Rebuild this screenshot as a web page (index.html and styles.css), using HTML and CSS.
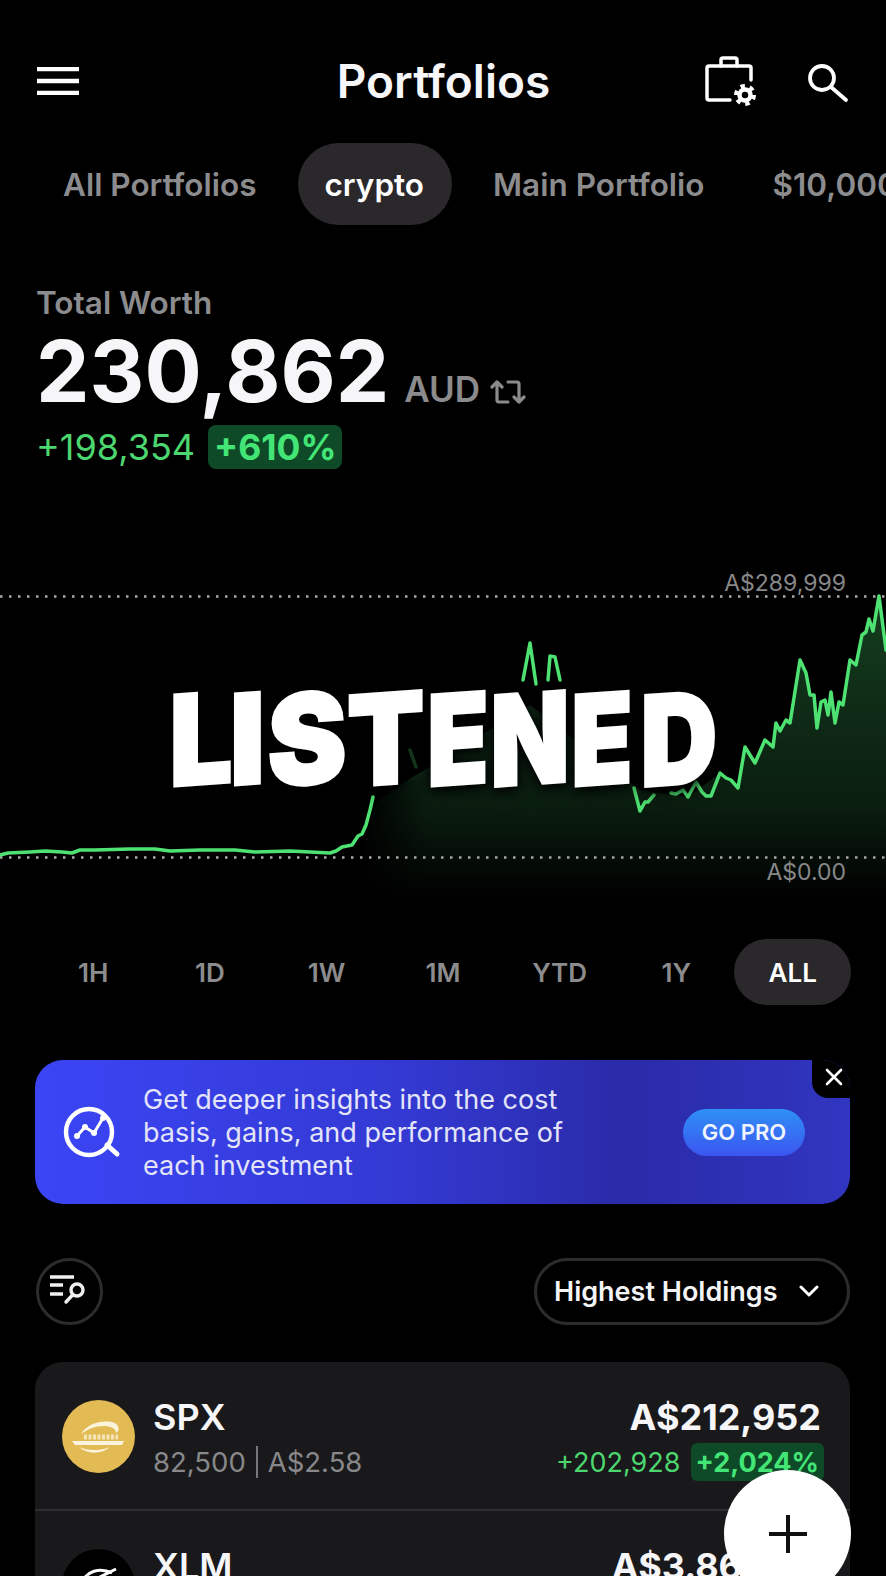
FILE: index.html
```html
<!DOCTYPE html>
<html lang="en">
<head>
<meta charset="utf-8">
<title>Portfolios</title>
<link rel="stylesheet" href="styles.css">
</head>
<body>
<div class="screen">
  <header class="header">
    <div class="header-left">
      <svg class="icon-menu" width="42" height="28" viewBox="0 0 42 28"><path d="M0 2h42M0 14h42M0 26h42" stroke="#fff" stroke-width="4.500"/></svg>
    </div>
    <h1 class="title">Portfolios</h1>
    <div class="header-right">
      <svg class="icon-case" width="60" height="56" viewBox="0 0 60 56" fill="none" stroke="#fff" stroke-width="3.5" stroke-linecap="round">
        <path d="M50 27V15a2 2 0 0 0-2-2H8a2 2 0 0 0-2 2V45a2 2 0 0 0 2 2H29"/>
        <path d="M20 13V7a2 2 0 0 1 2-2H34a2 2 0 0 1 2 2V13"/>
        <circle cx="44" cy="42" r="5.5" stroke-width="4.5"/>
        <circle cx="44" cy="42" r="9" stroke-width="4" stroke-dasharray="4.4 5" stroke-linecap="butt"/>
      </svg>
      <svg class="icon-search" width="50" height="50" viewBox="0 0 50 50" fill="none" stroke="#fff" stroke-width="3.8" stroke-linecap="round">
        <circle cx="20" cy="22" r="12"/>
        <path d="M29 31L44 44"/>
      </svg>
    </div>
  </header>

  <nav class="tabs">
    <span class="tab">All Portfolios</span>
    <span class="tab tab-active">crypto</span>
    <span class="tab">Main Portfolio</span>
    <span class="tab">$10,000</span>
  </nav>

  <section class="summary">
    <div class="summary-label">Total Worth</div>
    <div class="worth-row">
      <span class="worth">230,862</span>
      <span class="currency">AUD</span>
      <svg class="icon-swap" width="36" height="26" viewBox="0 0 36 26" fill="none" stroke="#8b8b8d" stroke-width="3.2" stroke-linecap="round" stroke-linejoin="round">
        <path d="M2 8L7 3L12 8M7 3V21a2 2 0 0 0 2 2H18"/>
        <path d="M34 18L29 23L24 18M29 23V5a2 2 0 0 0-2-2H18"/>
      </svg>
    </div>
    <div class="delta-row">
      <span class="delta">+198,354</span>
      <span class="delta-badge">+610%</span>
    </div>
  </section>

  <section class="chart">
    <svg class="chart-svg" width="886" height="340" viewBox="0 560 886 340">
      <defs>
        <linearGradient id="areaFill" x1="0" y1="0" x2="0" y2="1">
          <stop offset="0" stop-color="#15401f"/>
          <stop offset="0.35" stop-color="#0f2c17"/>
          <stop offset="0.7" stop-color="#0a1d0f"/>
          <stop offset="1" stop-color="#000"/>
        </linearGradient>
        <linearGradient id="areaEdge" x1="0" y1="0" x2="1" y2="0">
          <stop offset="0" stop-color="#000"/>
          <stop offset="1" stop-color="#000" stop-opacity="0"/>
        </linearGradient>
      </defs>
      <path fill="url(#areaFill)" d="M360 815L400 785L530 705L640 790L688 797L720 773L738 788L745 747L755 763L765 740L773 747L776 723L780 731L786 720L790 723L800 660L806 673L810 695L814 695L817 728L821 702L825 700L828 715L831 692L835 723L839 702L843 705L850 660L856 665L862 635L866 632L869 619L873 631L879 596L886 650V900H360Z"/>
      <rect x="360" y="780" width="70" height="120" fill="url(#areaEdge)"/>
      <path class="dots" d="M0 596.5H886M0 857.5H886"/>
      <path class="line" d="M0 855L8 853L30 852L45 851L62 852L72 853L80 850L95 850L130 849L155 849L170 851L200 850L235 850L255 852L290 851L330 853L336 851L342 847L352 845L358 836L362 834L366 825L370 810L373 797"/>
      <path class="line line-faint" d="M410 750L416 767"/>
      <path class="line" d="M523 680L530 643L536 684M548 680L550 656L555 657L560 680"/>
      <path class="line" d="M634 788L640 811L645 802L648 802L654 795M671 793L676 794L683 790L688 797L696 782L702 792L706 796L711 796L720 773L726 778L731 780L738 788L745 747L755 763L765 740L773 747L776 723L780 731L786 720L790 723L800 660L806 673L810 695L814 695L817 728L821 702L825 700L828 715L831 692L835 723L839 702L843 705L850 660L856 665L862 635L866 632L869 619L873 631L879 596L886 650"/>
    </svg>
    <span class="axis axis-top">A$289,999</span>
    <span class="axis axis-bottom">A$0.00</span>
  </section>

  <div class="ranges">
    <span class="range">1H</span>
    <span class="range">1D</span>
    <span class="range">1W</span>
    <span class="range">1M</span>
    <span class="range">YTD</span>
    <span class="range">1Y</span>
    <span class="range range-active">ALL</span>
  </div>

  <aside class="promo">
    <svg class="promo-icon" width="60" height="52" viewBox="0 0 60 52" fill="none" stroke="#fff" stroke-linecap="round" stroke-linejoin="round">
      <circle cx="27" cy="26" r="23" stroke-width="4.5"/>
      <path d="M45 39L55 48" stroke-width="5"/>
      <path d="M15 30L23 21L32 27L41 12" stroke-width="3"/>
      <g fill="#fff" stroke="none">
        <circle cx="15" cy="30" r="3"/><circle cx="23" cy="21" r="3"/><circle cx="32" cy="27" r="3"/><circle cx="41" cy="12" r="3"/>
      </g>
    </svg>
    <p class="promo-text">Get deeper insights into the cost<br>basis, gains, and performance of<br>each investment</p>
    <span class="go-pro">GO PRO</span>
    <span class="promo-close">
      <svg width="18" height="18" viewBox="0 0 18 18" stroke="#fff" stroke-width="2.6" stroke-linecap="round"><path d="M2 2L16 16M16 2L2 16"/></svg>
    </span>
  </aside>

  <div class="controls">
    <span class="filter-btn">
      <svg width="44" height="36" viewBox="0 0 44 36" fill="none" stroke="#f0f0f0" stroke-width="3.4">
        <path d="M2 3H26M2 11H15M2 20H15"/>
        <circle cx="29" cy="16" r="6"/>
        <path d="M24.500 21L18 28" stroke-linecap="round"/>
      </svg>
    </span>
    <span class="sort-btn">
      <span>Highest Holdings</span>
      <svg width="20" height="13" viewBox="0 0 20 13" fill="none" stroke="#fff" stroke-width="3" stroke-linecap="round" stroke-linejoin="round"><path d="M2 2L10 10L18 2"/></svg>
    </span>
  </div>

  <section class="holdings">
    <article class="holding">
      <svg class="coin" width="73" height="73" viewBox="0 0 73 73">
        <circle cx="36.500" cy="36.500" r="36.500" fill="#e2bb55"/>
        <g fill="#fbf3dc">
          <path d="M19 34C25 24 38 20 50 22C58 24 58 31 54 33C54 28 48 26 42 26C33 26 26 29 19 34Z"/>
          <path d="M10 41H62L60 45H13Z"/>
          <path d="M17 47C24 50 36 52 48 47C40 54 26 55 17 47Z"/>
        </g>
        <path d="M22 37H56" fill="none" stroke="#fbf3dc" stroke-width="5" stroke-dasharray="3 1.500" opacity="0.75"/>
      </svg>
      <div class="holding-main">
        <div class="symbol">SPX</div>
        <div class="amount">82,500<span class="sep"></span>A$2.58</div>
      </div>
      <div class="holding-side">
        <div class="value">A$212,952</div>
        <div class="gain-row">
          <span class="gain">+202,928</span>
          <span class="gain-badge">+2,024%</span>
        </div>
      </div>
    </article>
    <article class="holding holding-last">
      <svg class="coin" width="73" height="73" viewBox="0 0 73 73">
        <circle cx="36.500" cy="36.500" r="36.500" fill="#000"/>
        <path d="M20 34C24 22 38 18 50 24M54 20L18 38M56 28L20 46" fill="none" stroke="#fff" stroke-width="3"/>
      </svg>
      <div class="holding-main">
        <div class="symbol">XLM</div>
      </div>
      <div class="holding-side holding-side-cut">
        <div class="value">A$3.86</div>
      </div>
    </article>
  </section>

  <div class="caption">
    <span class="cap cap-l">L</span><span class="cap cap-i">I</span><span class="cap cap-s">S</span><span class="cap cap-t">T</span><span class="cap cap-e">E</span><span class="cap cap-n">N</span><span class="cap cap-e">E</span><span class="cap cap-d">D</span>
  </div>

  <button class="fab" type="button">
    <svg width="38" height="38" viewBox="0 0 38 38" stroke="#111" stroke-width="4"><path d="M0 19H38M19 0V38"/></svg>
  </button>
</div>
</body>
</html>
```

FILE: styles.css
```css
* { box-sizing: border-box; }

html, body {
  margin: 0;
  padding: 0;
  background: #000;
}

.screen {
  position: relative;
  width: 886px;
  height: 1576px;
  overflow: hidden;
  background: #000;
  color: #f6f6f8;
  font-family: "Inter", "Liberation Sans", sans-serif;
}

/* Header */
.header {
  display: grid;
  grid-template-columns: 1fr auto 1fr;
  align-items: center;
  height: 112px;
  padding: 50px 34px 0 37px;
}

.header-left { display: flex; align-items: center; }

.title {
  margin: 0 2px 0 0;
  font-size: 46px;
  line-height: 62px;
  font-weight: 600;
}

.header-right {
  display: flex;
  justify-content: flex-end;
  align-items: center;
  gap: 41px;
}

/* Tabs */
.tabs {
  display: flex;
  align-items: center;
  gap: 14px;
  height: 82px;
  margin-top: 31px;
  padding-left: 36px;
  overflow: hidden;
  white-space: nowrap;
}

.tab {
  display: flex;
  align-items: center;
  flex: none;
  height: 82px;
  padding: 0 27px;
  border-radius: 41px;
  font-size: 31.5px;
  font-weight: 600;
  color: #8c8c8e;
}

.tab-active {
  padding-right: 28px;
  background: #2a282b;
  color: #fff;
}

/* Summary */
.summary {
  margin-top: 62px;
  padding-left: 36px;
}

.summary-label {
  font-size: 31.5px;
  line-height: 32px;
  font-weight: 600;
  color: #8c8c8e;
}

.worth-row {
  display: flex;
  align-items: baseline;
  margin-top: 11px;
  height: 84px;
}

.worth {
  font-size: 85px;
  line-height: 84px;
  font-weight: 700;
}

.currency {
  margin-left: 15px;
  font-size: 35px;
  font-weight: 600;
  color: #8b8b8d;
}

.icon-swap { margin-left: 10px; align-self: flex-end; margin-bottom: 9px; }

.delta-row {
  display: flex;
  align-items: center;
  gap: 13px;
  margin-top: 11px;
  height: 44px;
}

.delta {
  font-size: 36px;
  color: #4cd66f;
}

.delta-badge {
  display: flex;
  align-items: center;
  height: 44px;
  padding: 0 6px;
  border-radius: 8px;
  background: #0e4a27;
  color: #43e676;
  font-size: 35.5px;
  font-weight: 700;
}

/* Chart */
.chart {
  position: relative;
  height: 340px;
  margin-top: 91px;
}

.chart-svg { display: block; }

.dots {
  fill: none;
  stroke: #a9a9a9;
  stroke-width: 2.5;
  stroke-dasharray: 2.5 6.5;
}

.line {
  fill: none;
  stroke: #4ee273;
  stroke-width: 3.5;
  stroke-linejoin: round;
  stroke-linecap: round;
}

.line-faint { opacity: 0.25; }

.axis {
  position: absolute;
  right: 40px;
  font-size: 23px;
  line-height: 28px;
  color: #88888a;
}

.axis-top { top: 9px; }
.axis-bottom { top: 298px; }

/* Ranges */
.ranges {
  display: flex;
  height: 66px;
  margin-top: 39px;
  padding: 0 35px;
}

.range {
  flex: 1;
  display: flex;
  align-items: center;
  justify-content: center;
  border-radius: 33px;
  font-size: 26px;
  font-weight: 600;
  color: #8c8c8e;
}

.range-active {
  background: #2a282b;
  color: #fff;
}

/* Promo */
.promo {
  position: relative;
  display: flex;
  align-items: center;
  height: 144px;
  margin: 55px 36px 0 35px;
  padding: 0 45px 0 27px;
  overflow: hidden;
  border-radius: 28px;
  background: linear-gradient(90deg, #3b45f5 0%, #3339d2 45%, #2a2ba8 72%, #3135c0 100%);
}

.promo-icon { flex: none; }

.promo-text {
  flex: 1;
  margin: 0 0 0 21px;
  font-size: 27px;
  line-height: 33px;
  color: #e3e4f8;
}

.go-pro {
  display: flex;
  align-items: center;
  justify-content: center;
  width: 122px;
  height: 47px;
  border-radius: 24px;
  background: linear-gradient(180deg, #2f90f6 0%, #3b55f0 100%);
  color: #f0f4ff;
  font-size: 22px;
  font-weight: 600;
}

.promo-close {
  position: absolute;
  top: 0;
  right: 0;
  display: flex;
  align-items: center;
  justify-content: center;
  width: 38px;
  height: 38px;
  padding: 0 0 5px 6px;
  background: #000;
  border-bottom-left-radius: 16px;
}

/* Controls */
.controls {
  display: flex;
  justify-content: space-between;
  height: 67px;
  margin: 54px 36px 0;
}

.filter-btn {
  display: flex;
  align-items: center;
  justify-content: center;
  width: 67px;
  height: 67px;
  border: 3px solid #2c2b2d;
  border-radius: 50%;
}

.sort-btn {
  display: flex;
  align-items: center;
  justify-content: space-between;
  width: 316px;
  height: 67px;
  padding: 0 28px 0 17px;
  border: 3px solid #2c2b2d;
  border-radius: 34px;
  font-size: 27px;
  font-weight: 600;
  color: #f4f4f6;
}

/* Holdings */
.holdings {
  margin: 37px 36px 0 35px;
  height: 300px;
  border-radius: 28px;
  background: #19181b;
}

.holding {
  display: flex;
  align-items: flex-start;
  height: 149px;
  padding: 33px 29px 0 27px;
  border-bottom: 2px solid #2f2e31;
}

.holding-last { border-bottom: 0; }

.coin { flex: none; margin-top: 5px; }

.holding-main {
  flex: 1;
  margin-left: 18px;
}

.symbol {
  font-size: 36px;
  line-height: 44px;
  font-weight: 600;
}

.amount {
  display: flex;
  align-items: center;
  height: 38px;
  margin-top: 4px;
  font-size: 27.5px;
  color: #88888a;
}

.sep {
  width: 2px;
  height: 32px;
  margin: 0 10px;
  background: #77777a;
}

.holding-side {
  display: flex;
  flex-direction: column;
  align-items: flex-end;
}

.holding-side-cut { margin-right: 79px; }

.value {
  font-size: 36px;
  line-height: 44px;
  font-weight: 700;
}

.gain-row {
  display: flex;
  align-items: center;
  gap: 10px;
  height: 38px;
  margin-top: 4px;
  margin-right: -3px;
}

.gain {
  font-size: 27px;
  color: #4cd66f;
}

.gain-badge {
  display: flex;
  align-items: center;
  height: 38px;
  padding: 0 5px;
  border-radius: 6px;
  background: #0e4a27;
  color: #43e676;
  font-size: 27px;
  font-weight: 700;
}

/* Caption over the video */
.caption {
  position: absolute;
  top: 684px;
  left: 171px;
  display: flex;
  height: 110px;
  font-family: "Inter", "Liberation Sans", sans-serif;
  font-size: 125px;
  line-height: 110px;
  font-weight: 900;
  color: #fff;
  filter: drop-shadow(0 2px 5px #000) drop-shadow(0 3px 8px rgba(0, 0, 0, 0.6));
}

.cap {
  display: flex;
  justify-content: center;
  -webkit-text-stroke: 3px #fff;
}

.cap-l { width: 60px; transform: skewY(-4deg) scaleX(0.89); }
.cap-i { width: 33px; transform: skewY(-4deg) scaleX(0.97); }
.cap-s { width: 86px; transform: skewY(-4deg) scaleX(0.95); }
.cap-t { width: 71px; transform: skewY(-4deg) scaleX(0.9); }
.cap-e { width: 74px; transform: skewY(-4deg) scaleX(0.8); }
.cap-n { width: 70px; transform: skewY(-4deg) scaleX(0.82); }
.cap-d { width: 80px; transform: skewY(-4deg) scaleX(0.85); }

/* Floating add button */
.fab {
  position: absolute;
  top: 1470px;
  left: 724px;
  display: flex;
  align-items: center;
  justify-content: center;
  width: 127px;
  height: 127px;
  padding: 0;
  border: 0;
  border-radius: 50%;
  background: #fff;
}
```
